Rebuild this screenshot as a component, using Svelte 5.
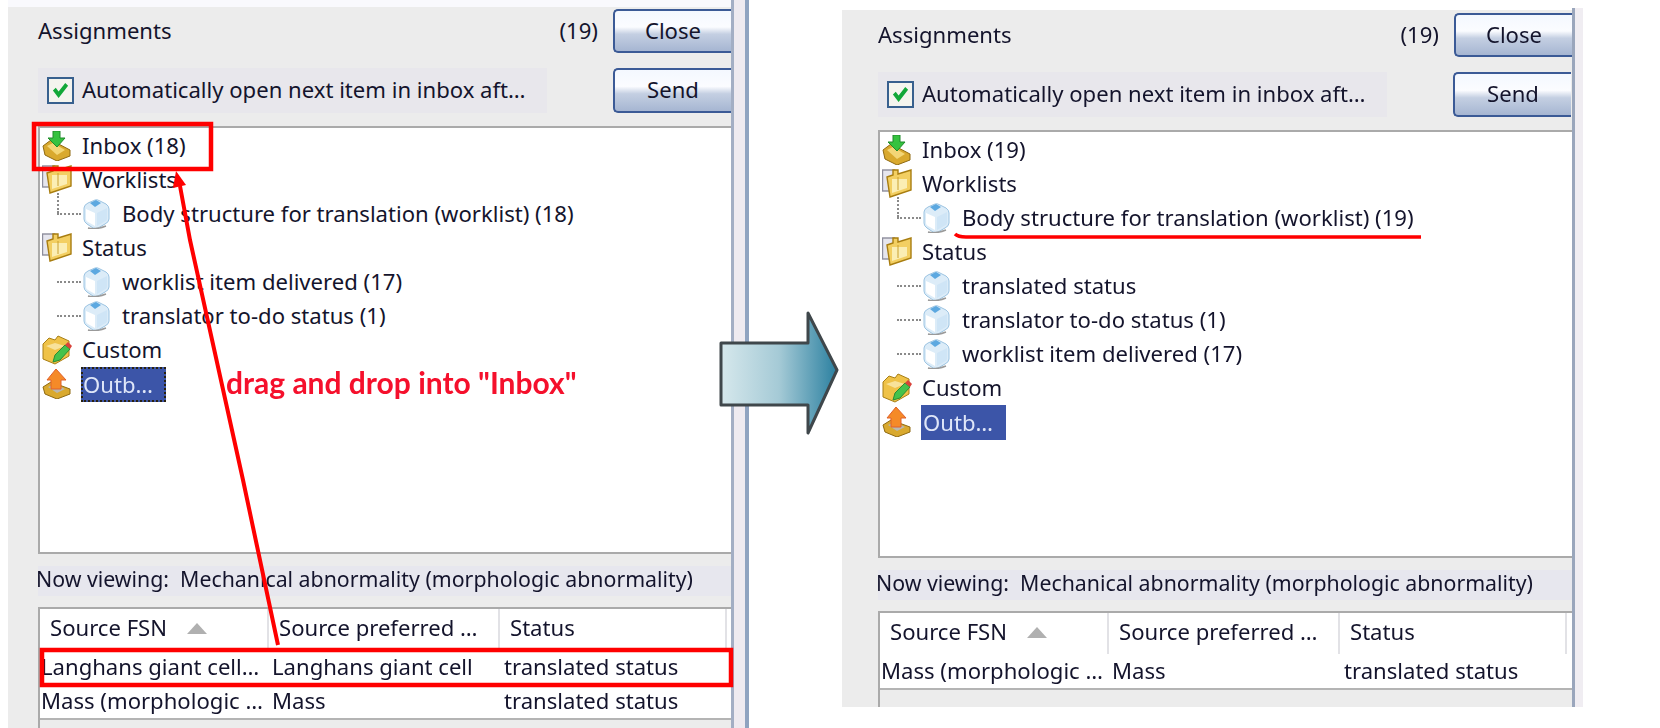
<script>
    const leftPanel = {
        side: "left",
        rows: [
            { kind: "inbox", label: "Inbox (18)" },
            { kind: "folder", label: "Worklists" },
            { kind: "cube", label: "Body structure for translation (worklist) (18)", elbow: true },
            { kind: "folder", label: "Status" },
            { kind: "cube", label: "worklist item delivered (17)" },
            { kind: "cube", label: "translator to-do status (1)" },
            { kind: "custom", label: "Custom" },
            { kind: "outbox", label: "Outb…", selected: true }
        ],
        items: [
            ["Langhans giant cell…", "Langhans giant cell", "translated status"],
            ["Mass (morphologic …", "Mass", "translated status"]
        ]
    };

    const rightPanel = {
        side: "right",
        rows: [
            { kind: "inbox", label: "Inbox (19)" },
            { kind: "folder", label: "Worklists" },
            { kind: "cube", label: "Body structure for translation (worklist) (19)", elbow: true },
            { kind: "folder", label: "Status" },
            { kind: "cube", label: "translated status" },
            { kind: "cube", label: "translator to-do status (1)" },
            { kind: "cube", label: "worklist item delivered (17)" },
            { kind: "custom", label: "Custom" },
            { kind: "outbox", label: "Outb…", selected: true }
        ],
        items: [["Mass (morphologic …", "Mass", "translated status"]]
    };
</script>

{#snippet icon(kind)}
    <svg class="icon" viewBox="0 0 30 30" aria-hidden="true">
        {#if kind === "inbox"}
            <path d="M1 15 L9 9 L28 19 L28 25 L15 30 L3 24 Z" fill="#d9a92e" stroke="#8f6a12" />
            <path d="M5 15 L11 12 L23 19 L15 24 Z" fill="#f3d676" />
            <path d="M11 0 H18 V7 H23 L15 16 L6 7 H11 Z" fill="#35c23f" stroke="#1e8a2b" />
        {:else if kind === "folder"}
            <rect x="0.5" y="1" width="12" height="21" fill="#e6e6ee" stroke="#8d8d9c" stroke-width="1.4" />
            <path d="M5 8 L11 6 V1 H16 V5 L29 1 V21 L8 28 Z" fill="#f3cf62" stroke="#a87d10" stroke-width="1.4" />
            <path d="M10 10 H25 V19 L10 24 Z" fill="#fbeeb4" />
            <path d="M16 8 V21" stroke="#c9a030" />
        {:else if kind === "cube"}
            <path d="M3 9 Q3 6 7 4 L14 1 Q16 0 19 2 L25 5 Q28 7 28 10 V20 Q28 23 24 25 L17 29 Q15 30 12 29 L6 25 Q3 23 3 20 Z" fill="#dcecf8" stroke="#9cc4e2" />
            <path d="M5 10 L14 14 V27 L7 23 Q5 22 5 20 Z" fill="#fff" />
            <path d="M16 14 L26 9 V20 Q26 22 23 23 L16 27 Z" fill="#cfe5f6" />
            <path d="M9 4 L15 1 L20 4 L14 8 Z" fill="#5ca8e0" />
            <path d="M7 29 Q15 31 25 27" fill="none" stroke="#9a9a9a" stroke-width="1.5" />
        {:else if kind === "custom"}
            <path d="M1 9 L7 3 L13 5 L16 1 L27 6 V21 L13 29 L1 24 Z" fill="#efc247" stroke="#a87f16" />
            <path d="M4 11 L13 8 L23 11 L13 15 Z" fill="#f8e29a" />
            <path d="M11 27 L13 20 L23 10 L28 14 L18 25 Z" fill="#45c24c" stroke="#2a8c33" />
            <path d="M23 10 L26 7 L30 11 L28 14 Z" fill="#d9433a" />
        {:else}
            <path d="M1 18 L9 13 L28 20 V25 L15 30 L3 25 Z" fill="#d9a92e" stroke="#8f6a12" />
            <path d="M6 18 L13 15 L23 20 L15 24 Z" fill="#b9b7b0" />
            <path d="M14 0 L24 11 H19 V20 H9 V11 H5 Z" fill="#f58a28" stroke="#e0602a" />
        {/if}
    </svg>
{/snippet}

{#snippet panel(p)}
    <section class="panel {p.side}">
        <div class="top-row">
            <span class="title">Assignments</span>
            <span class="count">(19)</span>
            <button class="btn">Close</button>
        </div>
        <div class="top-row second">
            <label class="auto">
                <span class="check">
                    <svg viewBox="0 0 20 20" aria-hidden="true"><path d="M2 10 L5 7 L8 11 L15 2 L18 5 L8 18 Z" fill="#12a838" /></svg>
                </span>
                <span class="auto-text">Automatically open next item in inbox aft…</span>
            </label>
            <button class="btn">Send</button>
        </div>
        <div class="tree">
            {#each p.rows as row}
                <div class="row" class:child={row.kind === "cube"}>
                    {#if row.kind === "cube"}
                        <span class="dots" class:elbow={row.elbow}></span>
                    {/if}
                    {@render icon(row.kind)}
                    <span class="label" class:selected={row.selected}>{row.label}</span>
                </div>
            {/each}
        </div>
        <div class="viewing"><span>Now viewing:&nbsp; Mechanical abnormality (morphologic abnormality)</span></div>
        <div class="table">
            <div class="thead">
                <div class="th"><span class="th-text">Source FSN</span> <span class="sort"></span></div>
                <div class="th"><span class="th-text">Source preferred …</span></div>
                <div class="th"><span class="th-text">Status</span></div>
            </div>
            <div class="tbody">
                {#each p.items as item}
                    <div class="tr">
                        {#each item as cell}
                            <div class="td">{cell}</div>
                        {/each}
                    </div>
                {/each}
            </div>
        </div>
    </section>
{/snippet}

<main class="page">
    <div class="left-wrap">
        {@render panel(leftPanel)}
    </div>
    <div class="divider"></div>
    {@render panel(rightPanel)}
    <div class="strip"></div>

    <!-- annotations drawn over the two screenshots -->
    <svg class="overlay" viewBox="0 0 1660 728" aria-hidden="true">
        <defs>
            <linearGradient id="arrowFill" x1="0" x2="1" y1="0" y2="0">
                <stop offset="0" stop-color="#d6e8ec" />
                <stop offset="0.5" stop-color="#a5cad6" />
                <stop offset="1" stop-color="#2b80a0" />
            </linearGradient>
        </defs>
        <rect x="34" y="124" width="177" height="45" fill="none" stroke="#f00" stroke-width="4.5" />
        <rect x="42" y="650" width="689" height="35" fill="none" stroke="#f00" stroke-width="4.5" />
        <path d="M278 645 L243 480 L190 240 L180 186" fill="none" stroke="#f00" stroke-width="4" />
        <path d="M176 171 L186 185 L173 188 Z" fill="#f00" />
        <path d="M955 234 Q958 237 966 237 L1421 237" fill="none" stroke="#f00" stroke-width="3.5" />
        <path d="M721 343 H808 V313 L837 370 L808 433 V405 H721 Z" fill="url(#arrowFill)" stroke="#3f474b" stroke-width="3" stroke-linejoin="round" />
    </svg>
    <div class="hint">drag and drop into "Inbox"</div>
</main>

<style>
    :global(body) {
        margin: 0;
        background: #fff;
    }

    .page {
        position: relative;
        display: flex;
        align-items: flex-start;
        width: 1660px;
        height: 728px;
        overflow: hidden;
        padding-left: 8px;
        box-sizing: border-box;
        font-family: "Noto Sans", sans-serif;
        font-size: 22.1px;
        color: #14142c;
        filter: blur(0.5px); /* the reference is an upscaled capture */
    }

    .left-wrap {
        width: 723px;
        padding-top: 7px;
        background: #f9f9fd;
    }

    .divider {
        width: 18px;
        height: 728px;
        box-sizing: border-box;
        margin-right: 93px;
        background: #eeeaf0;
        border-left: 3px solid #a3aec4;
        border-right: 4px solid #8fa3c0;
    }

    .strip {
        width: 8px;
        height: 699px;
        margin-top: 8px;
        background: #f0edf2;
        border-left: 3px solid #9aa6bc;
    }

    .panel {
        display: flex;
        flex-direction: column;
        box-sizing: border-box;
        background: #ececec;
        padding-left: 30px;
        width: 723px;
        height: 721px;
        padding-top: 2px;
    }

    .panel.right {
        width: 730px;
        height: 697px;
        margin-top: 10px;
        padding-left: 36px;
        padding-top: 3px;
    }

    .top-row {
        display: flex;
        align-items: center;
        height: 44px;
        flex: none;
    }

    .top-row.second {
        margin-top: 15px;
        height: 45px;
    }

    .title {
        flex: 1;
        padding-bottom: 2px;
    }

    .count {
        margin-right: 15px;
        padding-bottom: 2px;
    }

    .btn {
        width: 118px;
        height: 100%;
        box-sizing: border-box;
        border: 2px solid #3b5a96;
        border-right: none;
        border-radius: 5px 0 0 5px;
        background: linear-gradient(#f4f8ff 0%, #fbfcff 40%, #c4cfe2 58%, #a6b6d2 100%);
        font: inherit;
        color: inherit;
        padding: 0 0 3px;
    }

    .auto {
        flex: none;
        display: flex;
        align-items: center;
        gap: 8px;
        width: 509px;
        height: 100%;
        box-sizing: border-box;
        padding-left: 9px;
        margin-right: 66px;
        background: #e8e7ec;
        white-space: nowrap;
    }

    .auto-text {
        padding-bottom: 3px;
    }

    .check {
        display: flex;
        align-items: center;
        justify-content: center;
        width: 27px;
        height: 27px;
        box-sizing: border-box;
        border: 2px solid #38608e;
        background: #f4f4ee;
    }

    .check svg {
        width: 19px;
        height: 19px;
    }

    .tree {
        flex: none;
        box-sizing: border-box;
        height: 428px;
        margin-top: 13px;
        padding: 1px 0 0 2px;
        background: #fff;
        border-top: 2px solid #aaa;
        border-left: 2px solid #aaa;
        border-bottom: 2px solid #aaa;
    }

    .row {
        display: flex;
        align-items: center;
        height: 34px;
    }

    .label {
        padding-bottom: 2px;
    }

    .icon {
        flex: none;
        width: 30px;
        height: 30px;
        margin-right: 10px;
    }

    .row.child .icon {
        margin-right: 11px;
    }

    .dots {
        position: relative;
        flex: none;
        width: 24px;
        margin-left: 15px;
        border-bottom: 2px dotted #8a8a8a;
    }

    .dots.elbow::before {
        content: "";
        position: absolute;
        left: 0;
        bottom: 0;
        height: 20px;
        border-left: 2px dotted #8a8a8a;
    }

    .label.selected {
        box-sizing: border-box;
        width: 85px;
        height: 35px;
        line-height: 31px;
        margin-left: -1px;
        padding-bottom: 0;
        background: #3c55a8;
        color: #dfe6f8;
    }

    .left .label.selected {
        border: 2px dotted #2a2210;
    }

    .right .label.selected {
        padding: 2px 0 0 2px;
    }

    .viewing {
        flex: none;
        height: 30px;
        line-height: 25px;
        margin-top: 12px;
        background: #e7e7ee;
        white-space: nowrap;
    }

    .viewing span {
        margin-left: -2px;
        font-size: 21.3px;
    }

    .table {
        flex: 1;
        margin-top: 11px;
        border-left: 2px solid #aaa;
        border-top: 2px solid #aaa;
    }

    .thead {
        display: grid;
        grid-template-columns: 229px 231px 227px;
        height: 41px;
        background: #fff;
    }

    .th {
        display: flex;
        align-items: center;
        box-sizing: border-box;
        padding-left: 10px;
        border-right: 2px solid #e2e2e6;
        white-space: nowrap;
    }

    .th-text {
        padding-bottom: 5px;
    }

    .sort {
        margin: 0 0 3px 20px;
        border-left: 10px solid transparent;
        border-right: 10px solid transparent;
        border-bottom: 11px solid #b0b0b0;
    }

    .tbody {
        background: #fff;
        border-bottom: 2px solid #b4b4b4;
    }

    .tr {
        display: grid;
        grid-template-columns: 230px 232px 1fr;
        box-sizing: border-box;
        height: 34px;
        line-height: 31px;
        padding-top: 1px;
    }

    .td {
        padding-left: 2px;
        white-space: nowrap;
    }

    .td:first-child {
        padding-left: 1px;
    }

    .overlay {
        position: absolute;
        left: 0;
        top: 0;
        width: 1660px;
        height: 728px;
        pointer-events: none;
    }

    .hint {
        position: absolute;
        left: 226px;
        top: 364px;
        font-family: Lato, sans-serif;
        font-weight: 700;
        font-size: 30px;
        line-height: 36px;
        color: #f5102c;
        white-space: nowrap;
    }
</style>
